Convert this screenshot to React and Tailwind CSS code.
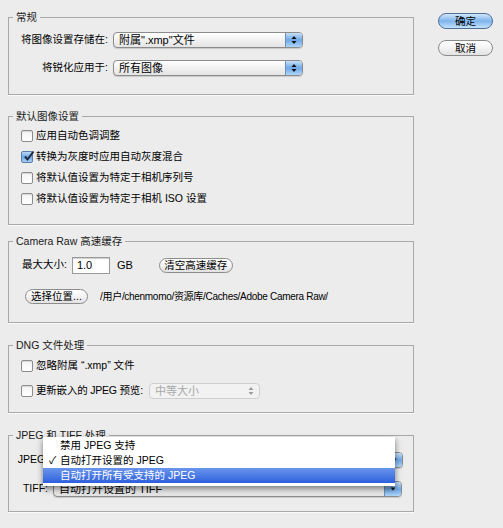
import React from 'react'

const Arrows = ({ color = '#111' }) => (
  <svg width="6" height="10" viewBox="0 0 6 10">
    <path d="M3 1 L5.5 4 L0.5 4 Z" fill={color} />
    <path d="M0.5 6 L5.5 6 L3 9 Z" fill={color} />
  </svg>
)

const DownArrow = () => (
  <svg width="6" height="6" viewBox="0 0 6 6">
    <path d="M0.5 1.5 L5.5 1.5 L3 4.5 Z" fill="#111" />
  </svg>
)

const AquaSelect = ({ value, className = '', disabled, pulldown }) => (
  <div
    className={`flex h-[16px] items-stretch rounded-[4px] border ${
      disabled ? 'border-[#cfcfcf] bg-[#f2f2f2]' : 'border-[#8c8c8c] bg-linear-to-b from-white to-[#e4e4e4] shadow-[0_1px_1px_rgba(0,0,0,0.15)]'
    } ${className}`}
  >
    <span className={`flex-1 truncate whitespace-nowrap pl-[5px] text-[11px] leading-[14px] ${disabled ? 'text-[#a8a8a8]' : 'text-black'}`}>
      {value}
    </span>
    {disabled ? (
      <span className="flex w-[16px] items-center justify-center">
        <Arrows color="#9a9a9a" />
      </span>
    ) : (
      <span className="flex w-[17px] items-center justify-center rounded-r-[3px] border-l border-[#6f8fb5] bg-linear-to-b from-[#c7e0f8] via-[#6ea8e6] to-[#aed6fa]">
        {pulldown ? <DownArrow /> : <Arrows />}
      </span>
    )}
  </div>
)

const Checkbox = ({ checked }) =>
  checked ? (
    <span className="relative flex h-[12px] w-[12px] shrink-0 items-center justify-center rounded-[2px] border border-[#5a7ea8] bg-linear-to-b from-[#bcd9f5] via-[#6fa6e2] to-[#a7d0f6]">
      <svg width="12" height="12" viewBox="0 0 12 12" className="absolute -top-[2px] left-[1px]">
        <path d="M2 6.5 L4.5 9.5 L10.5 1.5" stroke="#1b2a40" strokeWidth="2" fill="none" />
      </svg>
    </span>
  ) : (
    <span className="h-[12px] w-[12px] shrink-0 rounded-[2px] border border-[#8c8c8c] bg-linear-to-b from-[#f4f4f4] to-white shadow-[inset_0_1px_1px_rgba(0,0,0,0.12)]" />
  )

const CheckRow = ({ checked, children }) => (
  <div className="flex h-[21px] items-center gap-[3px] pl-[12px]">
    <Checkbox checked={checked} />
    <span className="whitespace-nowrap">{children}</span>
  </div>
)

const PillButton = ({ children, primary, className = '' }) => (
  <div
    className={`flex items-center justify-center whitespace-nowrap rounded-full border leading-none ${
      primary
        ? 'border-[#4f6f96] bg-linear-to-b from-[#d2e6fa] via-[#7db4ec] to-[#c2e2fc]'
        : 'border-[#8c8c8c] bg-linear-to-b from-white via-[#f3f3f3] to-[#e2e2e2]'
    } ${className}`}
  >
    {children}
  </div>
)

const Group = ({ title, className = '', children }) => (
  <fieldset className={`border border-[#a9a9a9] shadow-[0_1px_0_#fafafa] ${className}`}>
    <legend className="ml-[4px] px-[3px] leading-[16px] text-[#1a1a1a]">{title}</legend>
    {children}
  </fieldset>
)

export default function App() {
  return (
    <div className="flex h-[528px] w-[503px] bg-[#ececec] font-['Liberation_Sans','Noto_Sans_CJK_SC',sans-serif] text-[10.5px] text-black">
      <div className="ml-[8px] w-[406px] pt-[9px]">
        <Group title="常规" className="h-[86px]">
          <div className="flex flex-col gap-[12px] pt-[7px]">
            <div className="flex items-center">
              <span className="w-[99px] whitespace-nowrap text-right">将图像设置存储在:</span>
              <AquaSelect value={'附属".xmp"文件'} className="ml-[5px] w-[190px]" />
            </div>
            <div className="flex items-center">
              <span className="w-[99px] whitespace-nowrap text-right">将锐化应用于:</span>
              <AquaSelect value="所有图像" className="ml-[5px] w-[190px]" />
            </div>
          </div>
        </Group>

        <Group title="默认图像设置" className="mt-[13px] h-[117px]">
          <div className="pt-[1px]">
            <CheckRow>应用自动色调调整</CheckRow>
            <CheckRow checked>转换为灰度时应用自动灰度混合</CheckRow>
            <CheckRow>将默认值设置为特定于相机序列号</CheckRow>
            <CheckRow>将默认值设置为特定于相机 ISO 设置</CheckRow>
          </div>
        </Group>

        <Group title="Camera Raw 高速缓存" className="mt-[8px] h-[90px]">
          <div className="pt-[8px]">
            <div className="flex h-[16px] items-center pl-[13px]">
              <span className="whitespace-nowrap">最大大小:</span>
              <span className="ml-[5px] flex h-[17px] w-[38px] items-center border border-[#9a9a9a] bg-white pl-[4px] text-[11px] shadow-[inset_0_1px_1px_rgba(0,0,0,0.2)]">
                1.0
              </span>
              <span className="ml-[7px] text-[11px]">GB</span>
              <PillButton className="ml-[26px] h-[15px] w-[74px]">清空高速缓存</PillButton>
            </div>
            <div className="mt-[16px] flex h-[15px] items-center pl-[16px]">
              <PillButton className="h-[15px] w-[63px]">选择位置...</PillButton>
              <span className="ml-[12px] whitespace-nowrap text-[10px] tracking-[-0.3px]">/用户/chenmomo/资源库/Caches/Adobe Camera Raw/</span>
            </div>
          </div>
        </Group>

        <Group title="DNG 文件处理" className="mt-[14px] h-[76px]">
          <div className="flex flex-col gap-[9px] pt-[5px]">
            <div className="flex h-[16px] items-center gap-[3px] pl-[12px]">
              <Checkbox />
              <span className="whitespace-nowrap">忽略附属 “.xmp” 文件</span>
            </div>
            <div className="flex h-[16px] items-center gap-[3px] pl-[12px]">
              <Checkbox />
              <span className="whitespace-nowrap tracking-[-0.2px]">更新嵌入的 JPEG 预览:</span>
              <AquaSelect value="中等大小" disabled className="ml-[3px] w-[111px]" />
            </div>
          </div>
        </Group>

        <Group title="JPEG 和 TIFF 处理" className="mt-[14px] h-[85px]">
          <div className="relative flex flex-col gap-[13px] pt-[9px]">
            <div className="flex items-center">
              <span className="w-[39px] text-right">JPEG:</span>
              {/* value sits under the open menu */}
              <AquaSelect value="" pulldown className="ml-[5px] w-[350px]" />
            </div>
            <div className="flex items-center">
              <span className="w-[39px] text-right">TIFF:</span>
              <AquaSelect value="自动打开设置的 TIFF" pulldown className="ml-[5px] w-[349px]" />
            </div>

            <div className="absolute -top-[6px] left-[34px] w-[352px] bg-white pt-[1px] pb-[3px] text-[10.5px] shadow-[0_3px_6px_rgba(0,0,0,0.5)]">
              <div className="flex h-[15px] items-center pl-[17px]">禁用 JPEG 支持</div>
              <div className="flex h-[15px] items-center pl-[6px]">
                <span className="w-[11px]">✓</span>
                <span>自动打开设置的 JPEG</span>
              </div>
              <div className="flex h-[15px] items-center bg-linear-to-b from-[#6a95ec] to-[#2f5fdc] pl-[17px] text-white">
                自动打开所有受支持的 JPEG
              </div>
            </div>
          </div>
        </Group>
      </div>

      <div className="ml-[24px] flex flex-col gap-[11px] pt-[13px]">
        <PillButton primary className="h-[16px] w-[55px]">确定</PillButton>
        <PillButton className="h-[16px] w-[55px]">取消</PillButton>
      </div>
    </div>
  )
}
